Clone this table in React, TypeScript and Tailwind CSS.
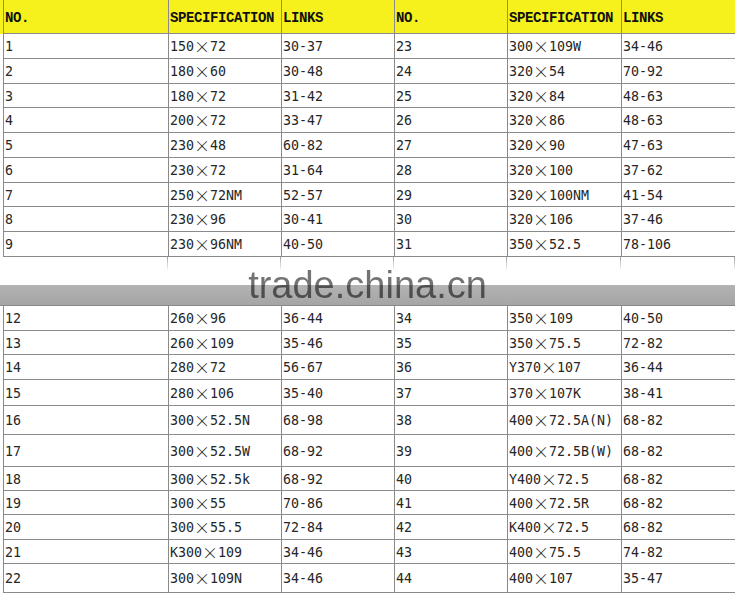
const GRID = 'grid grid-cols-[165px_113px_113px_113px_114px_114px] ml-[3px] border-l border-[#8a8a8a]';
const CELL = 'flex items-center border-r border-b border-[#8a8a8a] pl-px pt-[2px] whitespace-nowrap overflow-hidden';

type Row = { h: string; l: string[]; r: string[] };

const top: Row[] = [
  { h: 'h-[25px]', l: ['1', '150×72', '30-37'], r: ['23', '300×109W', '34-46'] },
  { h: 'h-[25px]', l: ['2', '180×60', '30-48'], r: ['24', '320×54', '70-92'] },
  { h: 'h-[24px]', l: ['3', '180×72', '31-42'], r: ['25', '320×84', '48-63'] },
  { h: 'h-[25px]', l: ['4', '200×72', '33-47'], r: ['26', '320×86', '48-63'] },
  { h: 'h-[25px]', l: ['5', '230×48', '60-82'], r: ['27', '320×90', '47-63'] },
  { h: 'h-[25px]', l: ['6', '230×72', '31-64'], r: ['28', '320×100', '37-62'] },
  { h: 'h-[24px]', l: ['7', '250×72NM', '52-57'], r: ['29', '320×100NM', '41-54'] },
  { h: 'h-[25px]', l: ['8', '230×96', '30-41'], r: ['30', '320×106', '37-46'] },
  { h: 'h-[25px]', l: ['9', '230×96NM', '40-50'], r: ['31', '350×52.5', '78-106'] },
];

const bottom: Row[] = [
  { h: 'h-[25px]', l: ['12', '260×96', '36-44'], r: ['34', '350×109', '40-50'] },
  { h: 'h-[24px]', l: ['13', '260×109', '35-46'], r: ['35', '350×75.5', '72-82'] },
  { h: 'h-[25px]', l: ['14', '280×72', '56-67'], r: ['36', 'Y370×107', '36-44'] },
  { h: 'h-[26px]', l: ['15', '280×106', '35-40'], r: ['37', '370×107K', '38-41'] },
  { h: 'h-[29px]', l: ['16', '300×52.5N', '68-98'], r: ['38', '400×72.5A(N)', '68-82'] },
  { h: 'h-[32px]', l: ['17', '300×52.5W', '68-92'], r: ['39', '400×72.5B(W)', '68-82'] },
  { h: 'h-[24px]', l: ['18', '300×52.5k', '68-92'], r: ['40', 'Y400×72.5', '68-82'] },
  { h: 'h-[24px]', l: ['19', '300×55', '70-86'], r: ['41', '400×72.5R', '68-82'] },
  { h: 'h-[25px]', l: ['20', '300×55.5', '72-84'], r: ['42', 'K400×72.5', '68-82'] },
  { h: 'h-[24px]', l: ['21', 'K300×109', '34-46'], r: ['43', '400×75.5', '74-82'] },
  { h: 'h-[29px]', l: ['22', '300×109N', '34-46'], r: ['44', '400×107', '35-47'] },
];

function Spec({ v }: { v: string }) {
  const [a, b] = v.split('×');
  return (
    <>
      <span>{a}</span>
      <span
        className="flex w-[16px] justify-center text-[16px] leading-none font-light mb-[2px]"
        style={{ fontFamily: '"Noto Sans CJK SC", sans-serif' }}
      >
        ×
      </span>
      <span>{b}</span>
    </>
  );
}

function DataRow({ row }: { row: Row }) {
  const cells = [...row.l, ...row.r];
  return (
    <div className={`${GRID} ${row.h}`}>
      {cells.map((c, i) => (
        <div key={i} className={CELL}>
          {i % 3 === 1 ? <Spec v={c} /> : c}
        </div>
      ))}
    </div>
  );
}

export default function App() {
  const heads = ['NO.', 'SPECIFICATION', 'LINKS', 'NO.', 'SPECIFICATION', 'LINKS'];

  return (
    <div
      className="w-[735px] h-[594px] overflow-hidden bg-[linear-gradient(to_bottom,#f6f11c_0,#f6f11c_34px,#ffffff_34px)] text-[#262626] text-[13.3px] leading-none"
      style={{ fontFamily: '"DejaVu Sans Mono", "Noto Sans CJK SC", monospace' }}
    >
      {/* Header */}
      <div className={`${GRID} h-[34px] bg-[#f6f11c]`}>
        {heads.map((h, i) => (
          <div
            key={i}
            className={`${CELL} font-bold text-[14px] tracking-[-0.4px] text-[#111]`}
            style={{ fontFamily: '"Liberation Mono", monospace' }}
          >
            {h}
          </div>
        ))}
      </div>

      {top.map((r) => (
        <DataRow key={r.l[0]} row={r} />
      ))}

      {/* Watermark band over rows 10-11 */}
      <div className="relative h-[49px] flex flex-col border-b border-[#8a8a8a]">
        <div className="h-[28px] grid grid-cols-[165px_113px_113px_113px_114px_114px] ml-[2px] pl-px">
          {heads.map((_, i) => (
            <div key={i} className="flex justify-end">
              <div className="w-px h-[14px] bg-gradient-to-b from-[#a0a0a0] to-transparent" />
            </div>
          ))}
        </div>
        <div className="flex-1 bg-[linear-gradient(to_bottom,#b3b3b3,#a5a5a5)]" />
        <div
          className="absolute inset-x-0 top-[9px] text-center text-[38px] leading-none text-black/55 blur-[0.4px]"
          style={{ fontFamily: '"Liberation Sans", Arial, sans-serif' }}
        >
          trade.china.cn
        </div>
      </div>

      {bottom.map((r) => (
        <DataRow key={r.l[0]} row={r} />
      ))}
    </div>
  );
}
